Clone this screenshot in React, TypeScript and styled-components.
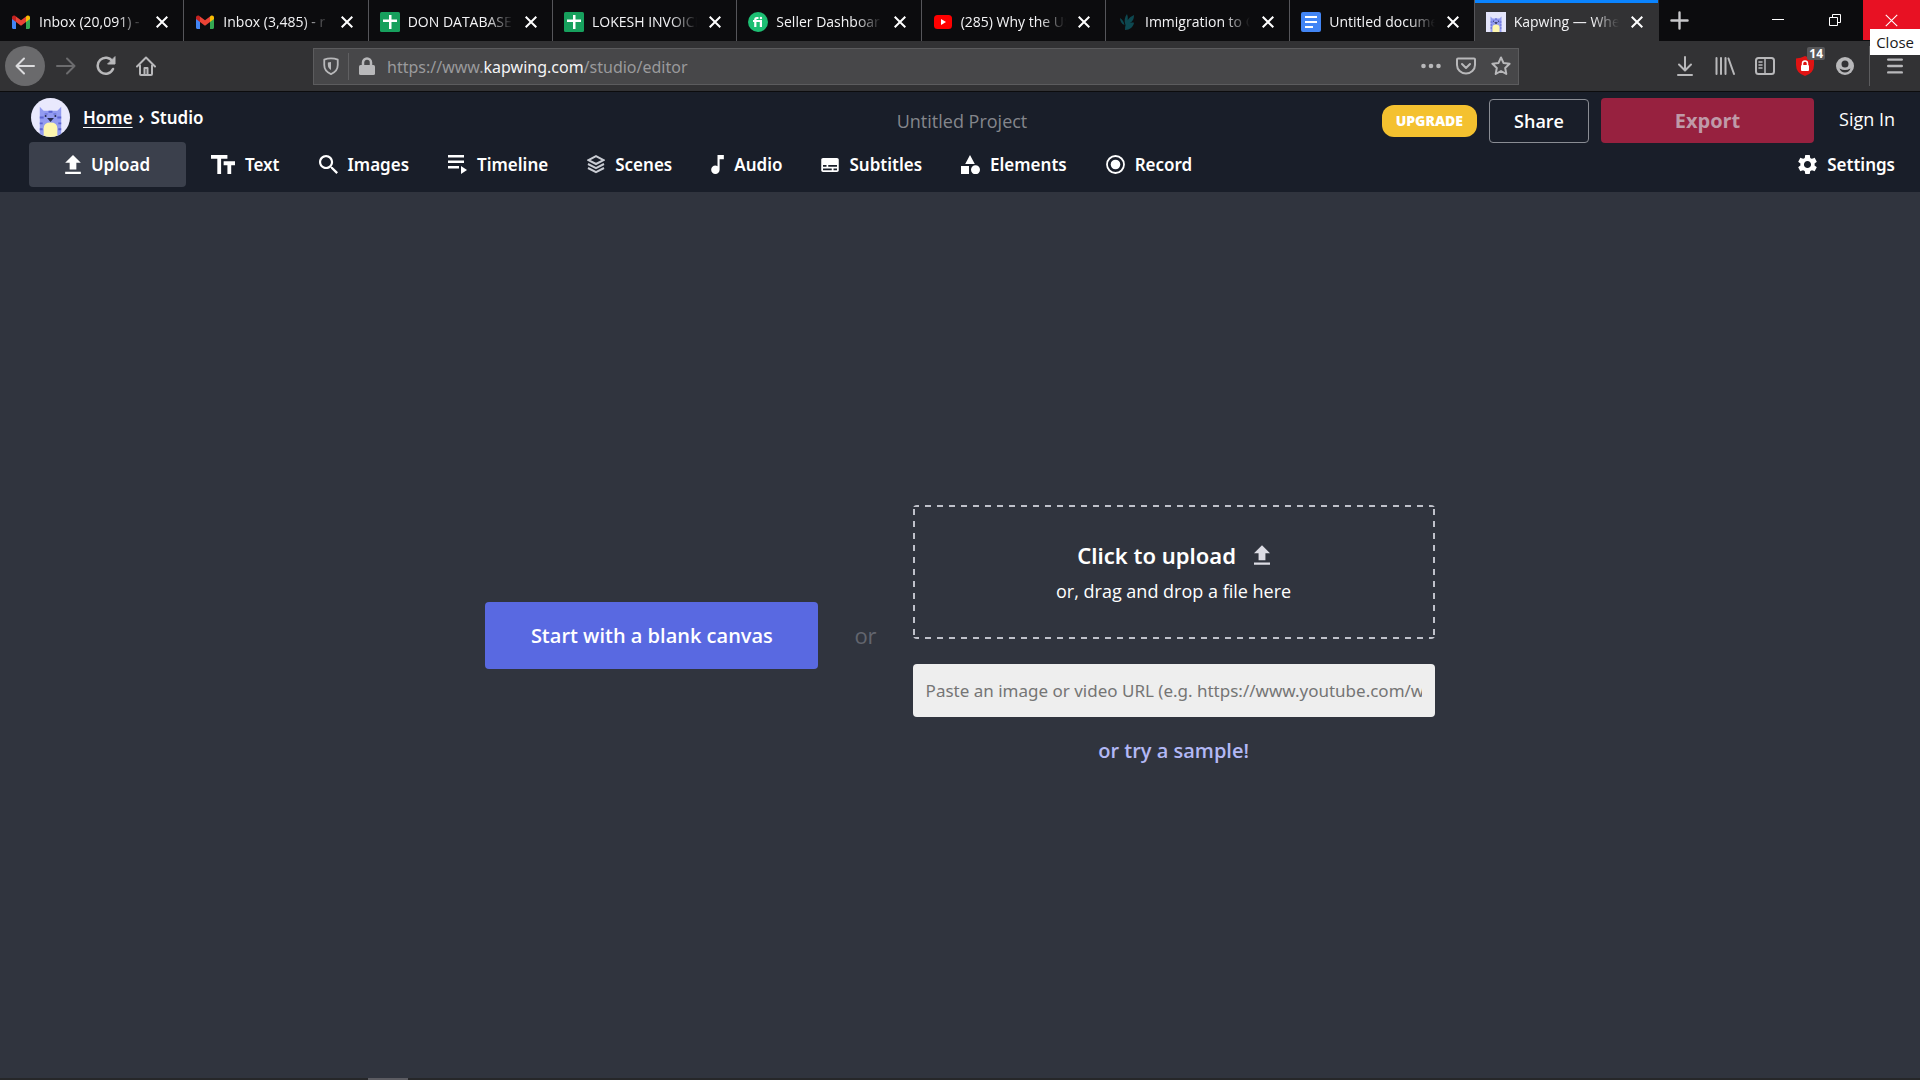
import React from "react";
import styled, { createGlobalStyle, css } from "styled-components";

const openSans = `"Open Sans", "Noto Sans", sans-serif`;
const notoSans = `"Noto Sans", "Open Sans", sans-serif`;

const GlobalStyle = createGlobalStyle`
  * { box-sizing: border-box; }
  body { margin: 0; background: #30343e; font-family: ${openSans}; color: #fff; }
  button { border: 0; padding: 0; background: none; color: inherit; font: inherit; cursor: pointer; }
  svg { display: block; flex: none; }
`;

const Page = styled.div`
  min-height: 100vh;
  display: flex;
  flex-direction: column;
`;

/* Browser window */

const TabBar = styled.div`
  display: flex;
  height: 41px;
  background: #0c0c0e;
`;

const TabList = styled.div`
  display: flex;
  flex: 0 1 1659px;
  min-width: 0;
`;

const Tab = styled.div<{ $active?: boolean }>`
  flex: 1 1 0;
  min-width: 0;
  display: flex;
  align-items: center;
  gap: 8px;
  padding: 2px 11px 0 11px;
  border-right: 1px solid #56565a;
  ${(p) =>
    p.$active &&
    css`
      background: #323234;
      border-right-color: #323234;
      box-shadow: inset 0 3px 0 #0a84ff;
    `}
`;

const TabTitle = styled.button`
  flex: 1;
  min-width: 0;
  overflow: hidden;
  white-space: nowrap;
  text-align: left;
  font-size: 14px;
  line-height: 24px;
  color: #f4f4f6;
  mask-image: linear-gradient(to right, #000 75%, transparent 100%);
`;

const TabClose = styled.button`
  width: 20px;
  height: 20px;
  display: grid;
  place-items: center;
`;

const NewTab = styled.button`
  width: 40px;
  display: grid;
  place-items: center;
  color: #c8c8ca;
`;

const WindowControls = styled.div`
  margin-left: auto;
  display: flex;
`;

const WindowButton = styled.button<{ $danger?: boolean }>`
  position: relative;
  width: 57px;
  height: 40px;
  display: grid;
  place-items: center;
  background: ${(p) => (p.$danger ? "#e81123" : "transparent")};
`;

const Tooltip = styled.span`
  position: absolute;
  z-index: 2;
  right: 0;
  top: 29px;
  padding: 0 6px;
  background: #fff;
  color: #1a1a1a;
  font-size: 15px;
  line-height: 26px;
`;

const NavBar = styled.div`
  display: flex;
  align-items: center;
  height: 51px;
  padding-left: 5px;
  background: #323234;
  border-bottom: 1px solid #0c0c0d;
  color: #b8b8ba;
`;

const NavButton = styled.button<{ $round?: boolean; $dim?: boolean }>`
  position: relative;
  width: 40px;
  height: 40px;
  display: grid;
  place-items: center;
  margin-right: ${(p) => (p.$round ? "1px" : "0")};
  border-radius: 50%;
  background: ${(p) => (p.$round ? "#6a6a6c" : "transparent")};
  color: ${(p) => (p.$round ? "#dcdcde" : p.$dim ? "#6c6c6e" : "inherit")};
`;

const AddressBar = styled.div`
  flex: 1;
  display: flex;
  align-items: center;
  height: 37px;
  margin: 0 146px 0 147px;
  background: #474749;
  border: 1px solid #5c5c5e;
`;

const AddressButton = styled.button<{ $divided?: boolean }>`
  width: 35px;
  height: 27px;
  display: grid;
  place-items: center;
  border-right: ${(p) => (p.$divided ? "1px solid #606062" : "0")};
`;

const Address = styled.div`
  flex: 1;
  padding: 2px 0 0 3px;
  font-family: ${notoSans};
  font-size: 16px;
  line-height: 24px;
  color: #9a9a9c;
  white-space: nowrap;
  outline: none;
`;

const Domain = styled.span`
  color: #f4f4f6;
`;

const Badge = styled.span`
  position: absolute;
  top: 1px;
  right: 0;
  padding: 0 2px;
  border-radius: 2px;
  background: #58585a;
  color: #fff;
  font-size: 12px;
  font-weight: 700;
  line-height: 13px;
`;

const MenuSlot = styled.div`
  display: flex;
  justify-content: center;
  width: 51px;
  margin-left: 4px;
  border-left: 1px solid #5c5c5e;
`;

/* Studio header */

const Header = styled.header`
  background: #191e29;
  padding: 6px 25px 5px 29px;
`;

const HeaderRow = styled.div`
  display: grid;
  grid-template-columns: 1fr auto 1fr;
  align-items: center;
  height: 45px;
`;

const Breadcrumb = styled.nav`
  align-self: start;
  display: flex;
  align-items: center;
  gap: 6px;
  padding-left: 2px;
  font-family: ${notoSans};
  font-size: 17px;
  font-weight: 600;
  line-height: 24px;
`;

const Logo = styled.svg`
  margin-right: 7px;
`;

const CrumbLink = styled.a`
  color: #fff;
  text-underline-offset: 3px;
`;

const ProjectName = styled.button`
  color: #84868c;
  font-size: 18px;
  font-weight: 500;
  line-height: 24px;
`;

const Actions = styled.div`
  display: flex;
  align-items: center;
  justify-content: flex-end;
  gap: 12px;
`;

const Upgrade = styled.button`
  height: 32px;
  padding: 0 14px;
  border-radius: 12px;
  background: #f4c12f;
  font-size: 14px;
  font-weight: 800;
`;

const Share = styled.button`
  width: 100px;
  height: 44px;
  border: 1px solid #8a8d94;
  border-radius: 4px;
  font-size: 18px;
  font-weight: 600;
`;

const Export = styled.button`
  width: 213px;
  height: 45px;
  border-radius: 4px;
  background: #97213f;
  color: #bf9aa8;
  font-size: 20px;
  font-weight: 700;
`;

const SignIn = styled.a`
  margin-left: 13px;
  padding-bottom: 4px;
  color: #fff;
  font-size: 18px;
  font-weight: 500;
  line-height: 24px;
  text-decoration: none;
`;

const Toolbar = styled.div`
  display: flex;
  align-items: center;
  margin-top: -1px;
  height: 45px;
  gap: 39px;
`;

const Tool = styled.button<{ $active?: boolean; $end?: boolean }>`
  display: flex;
  align-items: center;
  justify-content: center;
  gap: 10px;
  height: 45px;
  font-family: ${notoSans};
  font-size: 17px;
  font-weight: 600;
  line-height: 24px;
  ${(p) =>
    p.$active &&
    css`
      width: 157px;
      margin-right: -14px;
      border-radius: 4px;
      background: #3b404c;
    `}
  ${(p) => p.$end && "margin-left: auto;"}
`;

/* Start screen */

const Main = styled.main`
  flex: 1;
  display: flex;
  align-items: center;
  justify-content: center;
  gap: 36px;
`;

const BlankCanvas = styled.button`
  width: 333px;
  height: 67px;
  border-radius: 4px;
  background: #5969e1;
  font-size: 20px;
  font-weight: 600;
`;

const Or = styled.span`
  color: #62656e;
  font-size: 22px;
  line-height: 28px;
`;

const Sources = styled.div`
  width: 522px;
  padding-top: 2px;
  display: flex;
  flex-direction: column;
  align-items: center;
`;

const dashes = (direction: string) =>
  `repeating-linear-gradient(${direction}, #bfc1ca 0 6px, transparent 6px 12px)`;

const DropZone = styled.button`
  width: 100%;
  height: 134px;
  padding-top: 2px;
  border-radius: 4px;
  background:
    ${dashes("to right")} top / 100% 2px no-repeat,
    ${dashes("to right")} bottom / 100% 2px no-repeat,
    ${dashes("to bottom")} left / 2px 126px no-repeat,
    ${dashes("to bottom")} right / 2px 126px no-repeat;
  display: flex;
  flex-direction: column;
  align-items: center;
  justify-content: center;
  gap: 4px;
  font-size: 18px;
  line-height: 32px;
`;

const DropTitle = styled.span`
  display: flex;
  align-items: center;
  gap: 18px;
  font-family: ${notoSans};
  font-size: 22px;
  font-weight: 600;
`;

const UrlInput = styled.input`
  width: 100%;
  height: 53px;
  margin-top: 25px;
  padding: 0 13px;
  border: 0;
  border-radius: 4px;
  background: #eee;
  color: #333;
  font-family: ${notoSans};
  font-size: 17px;
  &::placeholder { color: #757575; opacity: 1; }
`;

const Sample = styled.a`
  margin-top: 18px;
  color: #b3b8f5;
  font-size: 20px;
  font-weight: 600;
  line-height: 32px;
  text-decoration: none;
`;

const BottomEdge = styled.footer`
  display: flex;
  height: 2px;
  padding-left: 368px;
  background: #262729;
`;

const EdgeMark = styled.span`
  width: 40px;
  background: #5c5c62;
`;

/* Icons */

const Gmail = () => (
  <svg width="20" height="20" viewBox="0 0 20 20">
    <path d="M1 5v10.5c0 .9.6 1.500 1.500 1.500H5V9z" fill="#4285f4" />
    <path d="M15 9v8h2.500c.9 0 1.500-.6 1.500-1.500V5z" fill="#34a853" />
    <path d="M5 4.500v5.500l5 3.800 5-3.800V4.500L10 8.300z" fill="#ea4335" />
    <path d="M1 5.500V7l4 3V4.500l-.9-.7C2.800 2.800 1 3.700 1 5.500z" fill="#c5221f" />
    <path d="M19 5.500V7l-4 3V4.500l.9-.7c1.300-1 3.100-.1 3.100 1.700z" fill="#fbbc04" />
  </svg>
);

const Sheets = () => (
  <svg width="20" height="20" viewBox="0 0 20 20">
    <rect width="20" height="20" rx="1.500" fill="#17a05d" />
    <path d="M9 3h2.500v4.500H17V10h-5.500v7H9v-7H3V7.500h6z" fill="#fff" />
  </svg>
);

const Fiverr = () => (
  <svg width="20" height="20" viewBox="0 0 20 20">
    <circle cx="10" cy="10" r="10" fill="#1dbf73" />
    <path d="M5 8h1.200V7.500C6.200 5.800 7.300 5 9 5h1.500v2H9.400c-.7 0-1 .2-1 .8V8H14v7h-2.200v-5H8.400v5H6.200v-5H5z" fill="#fff" />
    <circle cx="12.900" cy="6" r="1.200" fill="#fff" />
  </svg>
);

const YouTube = () => (
  <svg width="20" height="20" viewBox="0 0 20 20">
    <rect x="1" y="3" width="18" height="14" rx="3.500" fill="#f00" />
    <path d="M8 7v6l5-3z" fill="#fff" />
  </svg>
);

const Leaf = () => (
  <svg width="20" height="20" viewBox="0 0 20 20" fill="#0d4850">
    <path d="M3 6c3 2 4 4 4.500 7C4.500 12 3 9 3 6zM10 2c1.500 4 1 7-1.500 11C7 9 7.500 5 10 2zM17 3c0 4-1 6-4 8 4-1 4 0 4 0-1 4-4 7-9 7 0-8 4-13 9-15z" />
  </svg>
);

const Docs = () => (
  <svg width="20" height="20" viewBox="0 0 20 20">
    <rect width="20" height="20" rx="2" fill="#4285f4" />
    <path d="M4 4h12v2H4zM4 9h12v2H4zM4 14h8v2H4z" fill="#fff" />
  </svg>
);

const CatArt = () => (
  <>
    <path d="M9 9l4 4h14l4-4v31H9z" fill="#929bf0" />
    <path d="M9 19h4v2H9zM27 19h4v2h-4zM9 25h3v2H9zM28 25h3v2h-3zM9 31h3v2H9zM28 31h3v2h-3zM18 13h4v2h-4zM14 16h3v1h-3zM23 16h3v1h-3z" fill="#5a63cf" />
    <path d="M13 31q0-6 7-6t7 6v9H13z" fill="#fdf6ae" />
    <path d="M16.500 20.500h7L20 24.500z" fill="#262a4a" />
    <circle cx="15" cy="18.500" r="1" fill="#262a4a" />
    <circle cx="25" cy="18.500" r="1" fill="#262a4a" />
  </>
);

const CatFavicon = () => (
  <svg width="20" height="20" viewBox="0 0 40 40">
    <rect width="40" height="40" fill="#e4e5fb" />
    <CatArt />
  </svg>
);

const Cross = ({ size = 12, stroke = 2 }: { size?: number; stroke?: number }) => (
  <svg width={size} height={size} viewBox="0 0 12 12" fill="none" stroke="#fff" strokeWidth={stroke}>
    <path d="M.7.700l10.600 10.600M11.300.700L.7 11.300" />
  </svg>
);

const Line = ({ children, size = 20, width = 2 }: { children: React.ReactNode; size?: number; width?: number }) => (
  <svg width={size} height={size} viewBox="0 0 20 20" fill="none" stroke="currentColor" strokeWidth={width} strokeLinecap="round" strokeLinejoin="round">
    {children}
  </svg>
);

const Glyph = ({ box, w, h, d, fill = "currentColor" }: { box: string; w: number; h: number; d: string; fill?: string }) => (
  <svg width={w} height={h} viewBox={box} fill={fill}>
    <path d={d} />
  </svg>
);

const uploadPath = "M9 16h6v-6h4l-7-7-7 7h4zM5 18h14v2H5z";

const tabs = [
  { title: "Inbox (20,091) -", icon: <Gmail /> },
  { title: "Inbox (3,485) - r", icon: <Gmail /> },
  { title: "DON DATABASE", icon: <Sheets /> },
  { title: "LOKESH INVOICE", icon: <Sheets /> },
  { title: "Seller Dashboar", icon: <Fiverr /> },
  { title: "(285) Why the US", icon: <YouTube /> },
  { title: "Immigration to C", icon: <Leaf /> },
  { title: "Untitled docume", icon: <Docs /> },
  { title: "Kapwing — Whe", icon: <CatFavicon />, active: true },
];

const tools = [
  { label: "Upload", active: true, icon: <Glyph box="5 3 14 17" w={16} h={19} d={uploadPath} /> },
  { label: "Text", icon: <Glyph box="2.5 4 19 15" w={24} h={19} d="M2.500 4v3h5v12h3V7h5V4zm19 5h-9v3h3v7h3v-7h3z" /> },
  {
    label: "Images",
    icon: (
      <Glyph box="3 3 17.500 17.500" w={19} h={19} d="M15.500 14h-.79l-.28-.27C15.410 12.590 16 11.110 16 9.500 16 5.910 13.090 3 9.500 3S3 5.910 3 9.500 5.910 16 9.500 16c1.610 0 3.090-.59 4.230-1.570l.27.28v.79l5 4.990L20.490 19zm-6 0C7.010 14 5 11.990 5 9.500S7.010 5 9.500 5 14 7.010 14 9.500 11.990 14 9.500 14z" />
    ),
  },
  { label: "Timeline", icon: <Glyph box="0 0 19 19" w={19} h={19} d="M0 0h16v2.500H0zM0 5.500h16V8H0zM0 11h11v2.500H0zM13 11v8l6-4z" /> },
  {
    label: "Scenes",
    icon: (
      <svg width="18" height="19" viewBox="0 0 18 19" fill="none" stroke="#c9ccd3" strokeWidth="2">
        <path d="M9 1.200l7.500 3.900L9 9 1.500 5.100z" />
        <path d="M1 9l8 4.200L17 9M1 13l8 4.200 8-4.200" />
      </svg>
    ),
  },
  { label: "Audio", icon: <Glyph box="6 3 12 18" w={13} h={19} d="M12 3v10.550c-.59-.34-1.270-.55-2-.55-2.210 0-4 1.790-4 4s1.790 4 4 4 4-1.790 4-4V7h4V3z" /> },
  {
    label: "Subtitles",
    icon: <Glyph box="2 4 20 16" w={18} h={14} d="M20 4H4c-1.100 0-2 .9-2 2v12c0 1.100.9 2 2 2h16c1.100 0 2-.9 2-2V6c0-1.100-.9-2-2-2zM4 12h4v2H4zm10 6H4v-2h10zm6 0h-4v-2h4zm0-4H10v-2h10z" />,
  },
  {
    label: "Elements",
    icon: <Glyph box="0 0 19 19" w={19} h={19} d="M9 0l4.800 9H4.200zM0 11h8v8H0zM19 14.700a4.500 4.500 0 1 1-9 0 4.500 4.500 0 0 1 9 0z" />,
  },
  {
    label: "Record",
    icon: (
      <svg width="19" height="19" viewBox="0 0 19 19">
        <circle cx="9.500" cy="9.500" r="8.500" fill="none" stroke="#fff" strokeWidth="1.800" />
        <circle cx="9.500" cy="9.500" r="4.800" fill="#fff" />
      </svg>
    ),
  },
];

const gearPath =
  "M19.140 12.940c.04-.3.06-.61.06-.94 0-.32-.02-.64-.07-.94l2.030-1.580c.18-.14.23-.41.12-.61l-1.920-3.320c-.12-.22-.37-.29-.59-.22l-2.390.96c-.5-.38-1.030-.7-1.620-.94l-.36-2.540c-.04-.24-.24-.41-.48-.41h-3.840c-.24 0-.43.17-.47.41l-.36 2.540c-.59.24-1.130.57-1.620.94l-2.390-.96c-.22-.08-.47 0-.59.22L2.740 8.870c-.12.21-.08.47.12.61l2.030 1.580c-.05.3-.09.63-.09.94s.02.64.07.94l-2.030 1.580c-.18.14-.23.41-.12.61l1.920 3.320c.12.22.37.29.59.22l2.390-.96c.5.38 1.030.7 1.620.94l.36 2.540c.05.24.24.41.48.41h3.840c.24 0 .44-.17.47-.41l.36-2.540c.59-.24 1.130-.56 1.620-.94l2.390.96c.22.08.47 0 .59-.22l1.920-3.320c.12-.22.07-.47-.12-.61zM12 15.600c-1.980 0-3.600-1.620-3.600-3.600s1.620-3.600 3.600-3.600 3.600 1.620 3.600 3.600-1.620 3.600-3.600 3.600z";

export default function App() {
  return (
    <Page>
      <GlobalStyle />
      <TabBar>
        <TabList>
          {tabs.map((t) => (
            <Tab key={t.title} $active={t.active}>
              {t.icon}
              <TabTitle>{t.title}</TabTitle>
              <TabClose aria-label="Close tab">
                <Cross />
              </TabClose>
            </Tab>
          ))}
        </TabList>
        <NewTab aria-label="New tab">
          <Line width={2.5} size={19}>
            <path d="M10 1.500v17M1.500 10h17" />
          </Line>
        </NewTab>
        <WindowControls>
          <WindowButton aria-label="Minimize">
            <svg width="12" height="12" viewBox="0 0 12 12" fill="#fff">
              <path d="M0 5h12v1H0z" />
            </svg>
          </WindowButton>
          <WindowButton aria-label="Restore">
            <svg width="12" height="12" viewBox="0 0 12 12" fill="none" stroke="#fff">
              <path d="M.5 3.500h8v8h-8zM3.500 3.500v-3h8v8h-3" />
            </svg>
          </WindowButton>
          <WindowButton $danger aria-label="Close window">
            <Cross stroke={1} size={13} />
            <Tooltip role="tooltip">Close</Tooltip>
          </WindowButton>
        </WindowControls>
      </TabBar>

      <NavBar>
        <NavButton $round aria-label="Back">
          <Line><path d="M19 10H1.500M9 2.500L1.500 10 9 17.500" /></Line>
        </NavButton>
        <NavButton $dim aria-label="Forward">
          <Line><path d="M1 10h17.500M11 2.500l7.500 7.500-7.500 7.500" /></Line>
        </NavButton>
        <NavButton aria-label="Reload">
          <Line width={2.5}>
            <path d="M17 13A8 8 0 1 1 16.500 5.500" />
            <path d="M19 1v7h-7z" fill="currentColor" strokeWidth="1" />
          </Line>
        </NavButton>
        <NavButton aria-label="Home">
          <Line>
            <path d="M1 10.500l9-9 9 9M4 9.500V18q0 1 1 1h10q1 0 1-1V9.500" />
            <path d="M8.500 18v-6h3v6" />
          </Line>
        </NavButton>
        <AddressBar>
          <AddressButton $divided aria-label="Tracking protection">
            <Line size={18}>
              <path d="M10 1.500q4 0 7.500 1.500v6q0 7-7.500 10Q2.500 16 2.500 9V3Q6 1.500 10 1.500z" />
              <path d="M10 5.500v9Q6.500 12.500 6.500 9V6z" fill="currentColor" strokeWidth="0" />
            </Line>
          </AddressButton>
          <AddressButton aria-label="Site security">
            <svg width="16" height="18" viewBox="0 0 16 18">
              <rect y="8" width="16" height="10" rx="1.500" fill="currentColor" />
              <path d="M4 8V5.500a4 4 0 0 1 8 0V8" fill="none" stroke="currentColor" strokeWidth="2.500" />
            </svg>
          </AddressButton>
          <Address role="textbox" aria-label="Address" contentEditable suppressContentEditableWarning spellCheck={false}>
            https://www.<Domain>kapwing.com</Domain>/studio/editor
          </Address>
          <AddressButton aria-label="Page actions">
            <svg width="20" height="6" viewBox="0 0 20 6" fill="currentColor">
              <circle cx="2.500" cy="3" r="2.300" />
              <circle cx="10" cy="3" r="2.300" />
              <circle cx="17.500" cy="3" r="2.300" />
            </svg>
          </AddressButton>
          <AddressButton aria-label="Save to Pocket">
            <Line>
              <path d="M2 2.500h16q1 0 1 1V9a9 8.500 0 0 1-18 0V3.500q0-1 1-1z" />
              <path d="M6 8l4 4 4-4" />
            </Line>
          </AddressButton>
          <AddressButton aria-label="Bookmark">
            <Line><path d="M10 1.500l2.600 5.600 6 .7-4.400 4.200 1.100 6-5.300-3-5.300 3 1.100-6L1.400 7.800l6-.7z" /></Line>
          </AddressButton>
        </AddressBar>
        <NavButton aria-label="Downloads">
          <Line><path d="M10 1v13M4 8.500l6 6 6-6M3 19h14" /></Line>
        </NavButton>
        <NavButton aria-label="Library">
          <Line><path d="M1.500 2v16M6 2v16M10.500 2v16M13.500 2.500l5.500 15.500" /></Line>
        </NavButton>
        <NavButton aria-label="Sidebars">
          <Line>
            <rect x="1" y="2" width="18" height="16" rx="2.500" />
            <path d="M10 2v16M4 6h3M4 9h3M4 12h3" strokeWidth="1.500" />
          </Line>
        </NavButton>
        <NavButton aria-label="Ad blocker">
          <svg width="18" height="20" viewBox="0 0 18 20">
            <path d="M9 0q4 2 9 2.500V9q0 8-9 11Q0 17 0 9V2.500Q5 2 9 0z" fill="#e01313" />
            <rect x="5" y="9" width="8" height="6" rx="1" fill="#fff" />
            <path d="M6.500 9V7.500a2.500 2.500 0 0 1 5 0V9" fill="none" stroke="#fff" strokeWidth="1.500" />
          </svg>
          <Badge>14</Badge>
        </NavButton>
        <NavButton aria-label="Account">
          <svg width="18" height="18" viewBox="0 0 18 18">
            <circle cx="9" cy="9" r="9" fill="currentColor" />
            <path d="M9 3.500a3.500 3.500 0 0 1 3.500 3.500Q12.500 10.500 9 10.500T5.500 7A3.500 3.500 0 0 1 9 3.500z" fill="#323234" />
            <path d="M3.500 11.500q5.500 3 11 0Q13 15.500 9 15.500t-5.500-4z" fill="#323234" />
          </svg>
        </NavButton>
        <MenuSlot>
          <NavButton aria-label="Menu">
            <Line size={16} width={3}><path d="M1.500 2h17M1.500 10h17M1.500 18h17" /></Line>
          </NavButton>
        </MenuSlot>
      </NavBar>

      <Header>
        <HeaderRow>
          <Breadcrumb>
            <Logo width="39" height="39" viewBox="0 0 40 40">
              <defs>
                <clipPath id="logo-disc"><circle cx="20" cy="20" r="20" /></clipPath>
              </defs>
              <g clipPath="url(#logo-disc)">
                <rect width="40" height="40" fill="#e9e9fd" />
                <CatArt />
              </g>
            </Logo>
            <CrumbLink href="#home">Home</CrumbLink>
            <span>›</span>
            <span>Studio</span>
          </Breadcrumb>
          <ProjectName>Untitled Project</ProjectName>
          <Actions>
            <Upgrade>UPGRADE</Upgrade>
            <Share>Share</Share>
            <Export>Export</Export>
            <SignIn href="#sign-in">Sign In</SignIn>
          </Actions>
        </HeaderRow>
        <Toolbar>
          {tools.map((t) => (
            <Tool key={t.label} $active={t.active}>
              {t.icon}
              {t.label}
            </Tool>
          ))}
          <Tool $end>
            <Glyph box="2.500 2.400 19 19.200" w={19} h={19} d={gearPath} />
            Settings
          </Tool>
        </Toolbar>
      </Header>

      <Main>
        <BlankCanvas>Start with a blank canvas</BlankCanvas>
        <Or>or</Or>
        <Sources>
          <DropZone>
            <DropTitle>
              Click to upload
              <Glyph box="5 3 14 17" w={16} h={20} d={uploadPath} fill="#dcdce4" />
            </DropTitle>
            or, drag and drop a file here
          </DropZone>
          <UrlInput
            type="url"
            aria-label="Image or video URL"
            placeholder="Paste an image or video URL (e.g. https://www.youtube.com/watch?v=)"
          />
          <Sample href="#sample">or try a sample!</Sample>
        </Sources>
      </Main>
      <BottomEdge>
        <EdgeMark />
      </BottomEdge>
    </Page>
  );
}
